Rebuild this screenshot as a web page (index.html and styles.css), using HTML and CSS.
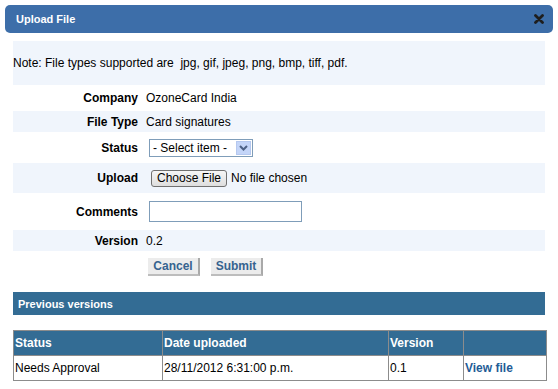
FILE: index.html
```html
<!DOCTYPE html>
<html lang="en">
<head>
    <meta charset="UTF-8">
    <meta name="viewport" content="width=device-width, initial-scale=1.0">
    <title>Upload File</title>
    <link rel="stylesheet" href="styles.css">
</head>
<body>
    <div class="dialog">
        <div class="titlebar">
            <span class="title">Upload File</span>
            <svg class="close" width="10" height="10" viewBox="0 0 10 10">
                <path d="M1.5 1.5 L8.5 8.5 M8.5 1.5 L1.5 8.5" stroke="#1e1e1e" stroke-width="2.8" stroke-linecap="round"/>
            </svg>
        </div>
        <div class="content">
            <div class="note">Note: File types supported are &nbsp;jpg, gif, jpeg, png, bmp, tiff, pdf.</div>
            <div class="form">
                <div class="row row-company">
                    <div class="label">Company</div>
                    <div class="value">OzoneCard India</div>
                </div>
                <div class="row row-alt row-type">
                    <div class="label">File Type</div>
                    <div class="value">Card signatures</div>
                </div>
                <div class="row row-status">
                    <div class="label">Status</div>
                    <div class="value">
                        <div class="select">
                            <span class="select-text">- Select item -</span>
                            <span class="select-arrow">
                                <svg width="9" height="6" viewBox="0 0 9 6">
                                    <path d="M1 1 L4.5 4.5 L8 1" fill="none" stroke="#4d6185" stroke-width="2"/>
                                </svg>
                            </span>
                        </div>
                    </div>
                </div>
                <div class="row row-alt row-upload">
                    <div class="label">Upload</div>
                    <div class="value">
                        <button class="file-btn">Choose File</button>
                        <span class="file-name">No file chosen</span>
                    </div>
                </div>
                <div class="row row-comments">
                    <div class="label">Comments</div>
                    <div class="value"><input type="text" class="text-input"></div>
                </div>
                <div class="row row-alt row-version">
                    <div class="label">Version</div>
                    <div class="value">0.2</div>
                </div>
                <div class="row row-actions">
                    <div class="label"></div>
                    <div class="value">
                        <button class="action-btn">Cancel</button>
                        <button class="action-btn">Submit</button>
                    </div>
                </div>
            </div>
            <div class="section-bar">Previous versions</div>
            <table class="versions">
                <colgroup>
                    <col class="col-status">
                    <col class="col-date">
                    <col class="col-version">
                    <col class="col-link">
                </colgroup>
                <thead>
                    <tr>
                        <th>Status</th>
                        <th>Date uploaded</th>
                        <th>Version</th>
                        <th></th>
                    </tr>
                </thead>
                <tbody>
                    <tr>
                        <td>Needs Approval</td>
                        <td>28/11/2012 6:31:00 p.m.</td>
                        <td>0.1</td>
                        <td><a href="#" class="view-link">View file</a></td>
                    </tr>
                </tbody>
            </table>
        </div>
    </div>
</body>
</html>
```

FILE: styles.css
```css
body {
    margin: 0;
    padding: 5px;
    background-color: #fff;
    font-family: "Liberation Sans", Arial, sans-serif;
    font-size: 12px;
    color: #000;
}
.dialog {
    width: 548px;
}
.titlebar {
    height: 28px;
    background-color: #3d6ea9;
    border-radius: 5px;
    display: flex;
    align-items: center;
    justify-content: space-between;
    padding: 0 9px 0 11px;
}
.title {
    color: #fff;
    font-weight: bold;
    font-size: 11px;
}
.close {
    display: block;
}
.content {
    padding: 8px 8px 0 8px;
}
.note {
    height: 44px;
    background-color: #f0f5fc;
    display: flex;
    align-items: center;
}
.form {
    display: flex;
    flex-direction: column;
    gap: 2px;
    margin-top: 2px;
}
.row {
    display: flex;
    align-items: center;
}
.row-alt {
    background-color: #f0f5fc;
}
.row-company { height: 22px; }
.row-type { height: 21px; }
.row-status { height: 27px; }
.row-upload { height: 30px; }
.row-comments { height: 33px; }
.row-version { height: 21px; }
.row-actions {
    height: 23px;
    align-items: flex-end;
}
.label {
    width: 125px;
    padding-right: 8px;
    text-align: right;
    font-weight: bold;
}
.value {
    display: flex;
    align-items: center;
}
.select {
    margin-left: 3px;
    width: 104px;
    height: 18px;
    box-sizing: border-box;
    border: 1px solid #7f9db9;
    display: flex;
    align-items: center;
    justify-content: space-between;
    background: #fff;
}
.select-text {
    padding-left: 3px;
}
.select-arrow {
    width: 15px;
    height: 14px;
    margin-right: 1px;
    background-color: #c4d5f8;
    border: 1px solid #b5c8ef;
    box-sizing: border-box;
    display: flex;
    align-items: center;
    justify-content: center;
}
.file-btn {
    margin-left: 5px;
    height: 17px;
    padding: 0 5px;
    font-family: inherit;
    font-size: 12px;
    color: #000;
    border: 1px solid #707070;
    border-radius: 3px;
    background: linear-gradient(#f6f6f6, #dedede);
}
.file-name {
    margin-left: 4px;
}
.text-input {
    margin-left: 3px;
    width: 153px;
    height: 21px;
    box-sizing: border-box;
    border: 1px solid #7f9db9;
    padding: 0 3px;
}
.action-btn {
    height: 18px;
    width: 52px;
    padding: 0;
    font-family: inherit;
    font-size: 12px;
    font-weight: bold;
    color: #36638f;
    background-color: #ececec;
    border: none;
    border-right: 2px solid #a9a9a9;
    border-bottom: 2px solid #bdbdbd;
    margin-left: 2px;
    margin-right: 9px;
}
.section-bar {
    margin-top: 16px;
    height: 23px;
    background-color: #336c94;
    color: #fff;
    font-weight: bold;
    font-size: 11px;
    display: flex;
    align-items: center;
    padding-left: 5px;
}
.versions {
    margin-top: 15px;
    width: 533px;
    border-collapse: collapse;
    table-layout: fixed;
}
.versions th,
.versions td {
    border: 1px solid #8c8c8c;
    text-align: left;
    padding: 0 0 0 1px;
    height: 24px;
    white-space: nowrap;
}
.versions th {
    background-color: #336c94;
    color: #fff;
    font-weight: bold;
}
.col-status { width: 149px; }
.col-date { width: 226px; }
.col-version { width: 75px; }
.col-link { width: 83px; }
.view-link {
    color: #1f5c96;
    font-weight: bold;
    text-decoration: none;
}
```
